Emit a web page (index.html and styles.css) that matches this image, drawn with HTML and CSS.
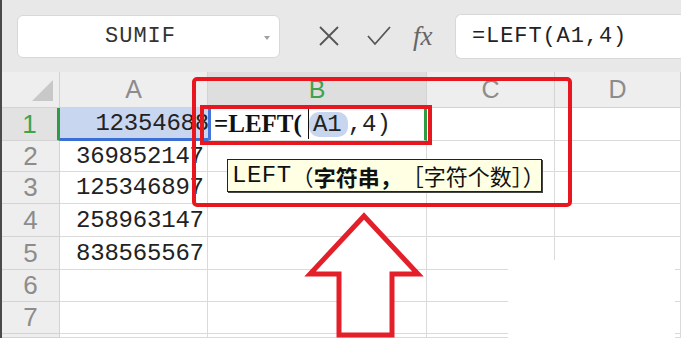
FILE: index.html
```html
<!DOCTYPE html>
<html>
<head>
<meta charset="utf-8">
<link rel="stylesheet" href="styles.css">
</head>
<body>
<div class="app">
  <div class="toolbar">
    <div class="namebox">
      <span class="name-text">SUMIF</span>
      <span class="drop"></span>
    </div>
    <div class="tools">
      <svg class="tool-icon" width="24" height="24" viewBox="0 0 24 24"><path d="M3 3 L21 21 M21 3 L3 21" stroke="#555" stroke-width="1.8" fill="none"/></svg>
      <svg class="tool-icon" width="26" height="24" viewBox="0 0 26 24"><path d="M2 12 L9 20 L24 3" stroke="#555" stroke-width="1.8" fill="none"/></svg>
      <span class="fx">fx</span>
    </div>
    <div class="formula">=LEFT(A1,4)</div>
  </div>

  <div class="sheet">
    <div class="corner"><span class="tri"></span></div>
    <div class="colhead">A</div>
    <div class="colhead active">B</div>
    <div class="colhead">C</div>
    <div class="colhead">D</div>

    <div class="rowhead active">1</div>
    <div class="cell num sel">12354688</div>
    <div class="cell edit">
      <span class="fn">=LEFT(</span><span class="cursor"></span><span class="ref">A1</span><span class="arg">,4)</span>
    </div>
    <div class="cell"></div>
    <div class="cell"></div>

    <div class="rowhead">2</div>
    <div class="cell num">369852147</div>
    <div class="cell"></div><div class="cell"></div><div class="cell"></div>

    <div class="rowhead">3</div>
    <div class="cell num">125346897</div>
    <div class="cell"></div><div class="cell"></div><div class="cell"></div>

    <div class="rowhead">4</div>
    <div class="cell num">258963147</div>
    <div class="cell"></div><div class="cell"></div><div class="cell"></div>

    <div class="rowhead">5</div>
    <div class="cell num">838565567</div>
    <div class="cell"></div><div class="cell"></div><div class="cell"></div>

    <div class="rowhead">6</div>
    <div class="cell"></div><div class="cell"></div><div class="cell"></div><div class="cell"></div>

    <div class="rowhead">7</div>
    <div class="cell"></div><div class="cell"></div><div class="cell"></div><div class="cell"></div>

    <div class="rowhead"></div>
    <div class="cell"></div><div class="cell"></div><div class="cell"></div><div class="cell"></div>
  </div>

  <!-- annotations drawn over the sheet -->
  <div class="patch"></div>
  <div class="mark-outer"></div>
  <div class="mark-inner"></div>
  <div class="tip"><span class="tip-fn">LEFT</span>（<b>字符串，</b>［字符个数］）</div>
  <svg class="arrow" width="681" height="338" viewBox="0 0 681 338">
    <polygon points="362,216 416,274 390,274 390,335 337,335 337,274 308,274" fill="#fff" stroke="#e3202a" stroke-width="5" stroke-linejoin="miter"/>
  </svg>
</div>
</body>
</html>
```

FILE: styles.css
```css
body {
  margin: 0;
  background: #fff;
  font-family: "Liberation Sans", Arial, sans-serif;
}

.app {
  position: relative;
  width: 681px;
  height: 338px;
  overflow: hidden;
  border-left: 2px solid #4a4a4a;
  box-sizing: border-box;
}

/* formula bar */
.toolbar {
  height: 72px;
  background: #e8e8e8;
  display: flex;
  align-items: center;
  padding-left: 15px;
}

.namebox {
  width: 263px;
  height: 43px;
  background: #fff;
  border: 1px solid #d8d8d8;
  border-radius: 6px;
  box-sizing: border-box;
  display: flex;
  align-items: center;
  justify-content: center;
  position: relative;
}

.name-text {
  font-family: "Liberation Mono", monospace;
  font-size: 22px;
  letter-spacing: 1px;
  color: #333;
  margin-left: -16px;
}

.drop {
  position: absolute;
  right: 9px;
  top: 20px;
  width: 0;
  height: 0;
  border-left: 3px solid transparent;
  border-right: 3px solid transparent;
  border-top: 4px solid #a0a0a0;
}

.tools {
  display: flex;
  align-items: center;
  gap: 25px;
  margin-left: 37px;
  width: 138px;
}

.fx {
  font-family: "Liberation Serif", serif;
  font-style: italic;
  font-size: 27px;
  color: #666;
  margin-left: -4px;
}

.formula {
  flex: 1;
  height: 43px;
  background: #fff;
  border: 1px solid #d8d8d8;
  border-right: none;
  border-radius: 6px 0 0 6px;
  display: flex;
  align-items: center;
  padding-left: 16px;
  font-family: "Liberation Mono", monospace;
  font-size: 22px;
  letter-spacing: 0.9px;
  color: #222;
}

/* grid */
.sheet {
  display: grid;
  grid-template-columns: 58px 148px 219px 128px 1fr;
  grid-template-rows: 36px 33px 31px 32px 33px 33px 32px 32px 1fr;
  height: 266px;
}

.corner,
.colhead,
.rowhead {
  background: #eeeeee;
  border-right: 1px solid #d3d3d3;
  border-bottom: 1px solid #d3d3d3;
  box-sizing: border-box;
}

.corner {
  display: flex;
  justify-content: flex-end;
  align-items: flex-end;
  padding: 0 6px 6px 0;
}

.tri {
  width: 21px;
  height: 21px;
  background: #c8c8c8;
  clip-path: polygon(100% 0, 100% 100%, 0 100%);
}

.colhead {
  display: flex;
  align-items: center;
  justify-content: center;
  font-size: 25px;
  color: #8c8c8c;
}

.colhead.active {
  background: #dedede;
  color: #3fa34d;
}

.rowhead {
  display: flex;
  align-items: center;
  justify-content: center;
  font-size: 26px;
  color: #8c8c8c;
}

.rowhead.active {
  background: #e2e2e2;
  color: #3fa34d;
  border-right: 3px solid #2f9c45;
}

.cell {
  border-right: 1px solid #dadada;
  border-bottom: 1px solid #dadada;
  box-sizing: border-box;
  display: flex;
  align-items: center;
  overflow: hidden;
  white-space: nowrap;
}

.num {
  padding-left: 16px;
  font-family: "Liberation Mono", monospace;
  font-size: 24px;
  letter-spacing: -0.2px;
  color: #222;
}

.sel {
  background: #c8d6f0;
  border-bottom: 3px solid #3b6fd6;
  justify-content: flex-end;
  padding-right: 0;
  margin-right: -2px;
}

.edit {
  background: #fff;
  border-left: 3px solid #4574da;
  border-right: 3px solid #2f9c45;
  padding-left: 3px;
  position: relative;
  z-index: 1;
}

.fn {
  font-family: "Liberation Serif", serif;
  font-weight: bold;
  font-size: 25px;
  color: #111;
  margin-right: 6px;
}

.cursor {
  width: 1px;
  height: 30px;
  background: #111;
}

.ref {
  font-family: "Liberation Mono", monospace;
  font-size: 24px;
  color: #222;
  background: #c8d5ef;
  border-radius: 10px;
  padding: 0 6px 0 4px;
  line-height: 25px;
}

.arg {
  font-family: "Liberation Mono", monospace;
  font-size: 24px;
  color: #222;
}

/* annotations */
.patch {
  position: absolute;
  left: 506px;
  top: 260px;
  width: 167px;
  height: 78px;
  background: #fff;
}

.mark-outer {
  position: absolute;
  left: 190px;
  top: 77px;
  width: 380px;
  height: 130px;
  border: 4px solid #e8161e;
  border-radius: 5px;
  box-sizing: border-box;
}

.mark-inner {
  position: absolute;
  left: 198px;
  top: 105px;
  width: 232px;
  height: 40px;
  border: 4px solid #e8161e;
  box-sizing: border-box;
  z-index: 2;
}

.tip {
  position: absolute;
  left: 225px;
  top: 159px;
  width: 315px;
  height: 33px;
  box-sizing: border-box;
  background: #ffffe3;
  border: 1px solid #222;
  box-shadow: 1px 1px 0 #444;
  padding-left: 4px;
  display: flex;
  align-items: center;
  font-family: "Liberation Mono", "Noto Sans CJK SC", monospace;
  font-size: 22px;
  color: #111;
  white-space: nowrap;
}

.tip-fn {
  letter-spacing: 0.5px;
  font-size: 24px;
}

.tip b {
  font-family: "Noto Sans CJK SC", sans-serif;
}

.arrow {
  position: absolute;
  left: 0;
  top: 0;
}
```
